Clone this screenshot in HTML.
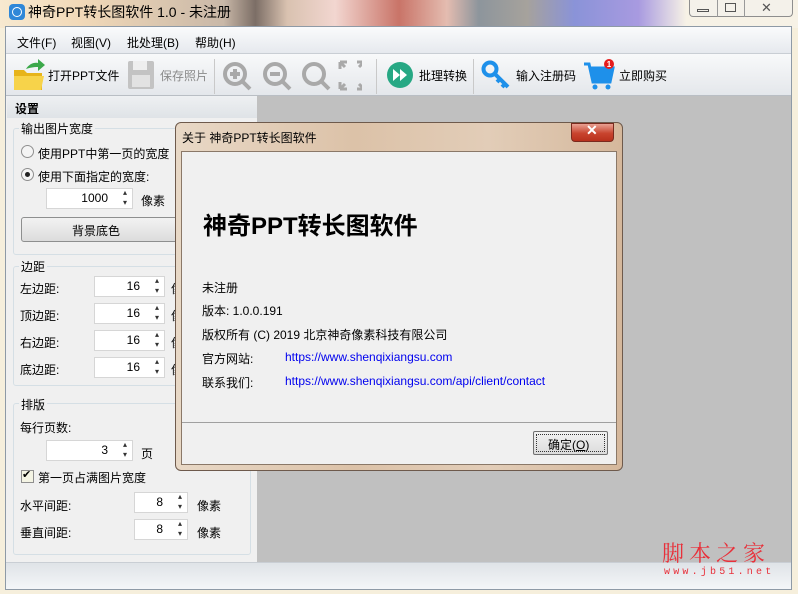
<!DOCTYPE html>
<html><head><meta charset="utf-8"><style>
*{margin:0;padding:0;box-sizing:border-box}
body{width:798px;height:594px;overflow:hidden;position:relative;font-family:"Liberation Sans","Noto Sans CJK SC",sans-serif;font-size:12px;color:#000;background:#f6efdc}
.a{position:absolute}
.t{position:absolute;white-space:nowrap}
.spin{position:absolute;background:#fff;border:1px solid #d6d6d6;text-align:right;padding-right:24px;font-size:12px;line-height:19px;height:21px}
.spin:after{content:"▴\A▾";white-space:pre;position:absolute;right:5px;top:-1px;font-size:8px;line-height:10px;color:#333}
.gb{position:absolute;border:1px solid #d5dfe5;border-radius:3px}
.gl{position:absolute;background:#f0f0f0;padding:0 2px;font-size:12px;line-height:14px}
a{color:#0000ee;text-decoration:none}
</style></head><body>
<div class="a" style="left:0;top:0;width:798px;height:28px;background:linear-gradient(90deg,#f7e9d0 0,#f2d9b8 10%,#c9b8a8 28%,#7c6e66 32%,#d9c2b0 36%,#f2d6d0 42%,#c97468 50%,#e4bcb0 56%,#8d959c 60%,#a6a29c 66%,#8a93d8 72%,#a89ae0 80%,#f7f2e6 86%,#f7f2e6 100%)"></div>
<div class="a" style="left:9px;top:4px;width:16px;height:16px;border-radius:4px;background:#2f87d8"></div>
<div class="a" style="left:12px;top:7px;width:10px;height:10px;border-radius:5px;border:1.5px solid #fff"></div>
<div class="t" style="left:28px;top:3px;font-size:14px;line-height:18px">神奇PPT转长图软件 1.0 - 未注册</div>
<div class="a" style="left:689px;top:0;width:104px;height:17px;border:1px solid #8e8e8e;border-top:none;border-radius:0 0 4px 4px;background:#f4f1ea"></div>
<div class="a" style="left:717px;top:0;width:1px;height:17px;background:#999"></div>
<div class="a" style="left:744px;top:0;width:1px;height:17px;background:#999"></div>
<div class="a" style="left:697px;top:9px;width:12px;height:3px;border:1px solid #555"></div>
<div class="a" style="left:725px;top:3px;width:11px;height:9px;border:1px solid #555"></div>
<div class="t" style="left:761px;top:0;font-size:13px;color:#555">✕</div>
<div class="a" style="left:5px;top:26px;width:787px;height:564px;background:#f0f0f0;border:1px solid #8e9aa6"></div>
<div class="a" style="left:6px;top:27px;width:785px;height:27px;background:linear-gradient(#fafbfc,#e6e9ee);border-bottom:1px solid #c9ced4"></div>
<div class="t" style="left:17px;top:34px;font-size:12px">文件(F)</div>
<div class="t" style="left:71px;top:34px">视图(V)</div>
<div class="t" style="left:127px;top:34px">批处理(B)</div>
<div class="t" style="left:195px;top:34px">帮助(H)</div>
<div class="a" style="left:6px;top:54px;width:785px;height:42px;background:linear-gradient(#f8f9fa,#e4e7eb);border-bottom:1px solid #b9bec4"></div>
<svg class="a" style="left:12px;top:56px" width="36" height="36"><path d="M2 14h10l3 3h15v17H2z" fill="#e7b41a"/><path d="M2 20h30l-3 14H2z" fill="#f7d34a"/><path d="M14 13c3-5 8-7 12-6v-4l7 6-7 6v-4c-5 0-9 1-12 2z" fill="#3ba84a"/></svg>
<div class="t" style="left:48px;top:67px">打开PPT文件</div>
<svg class="a" style="left:127px;top:60px" width="28" height="30"><rect x="1" y="1" width="26" height="28" rx="2" fill="#c3c3c3"/><rect x="6" y="1" width="14" height="9" fill="#eee"/><rect x="5" y="15" width="18" height="12" fill="#e2e2e2"/></svg>
<div class="t" style="left:160px;top:67px;color:#8a8a8a">保存照片</div>
<div class="a" style="left:214px;top:59px;width:1px;height:35px;background:#c9c9c9"></div>
<svg class="a" style="left:222px;top:59px" width="140" height="34" fill="none" stroke="#a9a9a9" stroke-width="4"><circle cx="13" cy="15" r="10"/><path d="M21 23l7 7M8 15h10M13 10v10"/><circle cx="53" cy="15" r="10"/><path d="M61 23l7 7M48 15h10"/><circle cx="92" cy="15" r="10"/><path d="M100 23l7 7"/><path d="M118 3h7M118 3v7M118 3l5 5M142 3h-7M142 3v7M142 3l-5 5M118 30h7M118 30v-7M118 30l5-5M142 30h-7M142 30v-7M142 30l-5-5" stroke-width="3"/></svg>
<div class="a" style="left:376px;top:59px;width:1px;height:35px;background:#c9c9c9"></div>
<svg class="a" style="left:386px;top:61px" width="28" height="28"><circle cx="14" cy="14" r="13" fill="#27a884"/><path d="M7 8l7 6-7 6zM14 8l7 6-7 6z" fill="#fff"/></svg>
<div class="t" style="left:419px;top:67px">批理转换</div>
<div class="a" style="left:473px;top:59px;width:1px;height:35px;background:#c9c9c9"></div>
<svg class="a" style="left:481px;top:60px" width="32" height="30"><circle cx="9" cy="9" r="6.5" fill="none" stroke="#1e90ea" stroke-width="4"/><path d="M13 13l14 14M19 19l-3 3M24 24l-3 3" stroke="#1e90ea" stroke-width="4"/></svg>
<div class="t" style="left:516px;top:67px">输入注册码</div>
<svg class="a" style="left:583px;top:58px" width="34" height="34"><path d="M1 6h5l4 18h17l3-14H8" fill="none" stroke="#1e90ea" stroke-width="3"/><path d="M8 10h22l-3 14H10z" fill="#1e90ea"/><circle cx="12" cy="29" r="2.5" fill="#1e90ea"/><circle cx="25" cy="29" r="2.5" fill="#1e90ea"/><circle cx="26" cy="6" r="5" fill="#e61c1c"/><text x="26" y="9" font-size="8" fill="#fff" text-anchor="middle" font-family="Liberation Sans" font-weight="bold">1</text></svg>
<div class="t" style="left:619px;top:67px">立即购买</div>
<div class="a" style="left:257px;top:96px;width:534px;height:466px;background:#c0c0c0"></div>
<div class="a" style="left:7px;top:96px;width:250px;height:22px;background:linear-gradient(#eef0f2,#dfe3e7)"></div>
<div class="t" style="left:15px;top:100px;font-weight:bold">设置</div>
<div class="gb" style="left:13px;top:128px;width:244px;height:127px"></div>
<div class="gl" style="left:19px;top:122px">输出图片宽度</div>
<div class="a" style="left:21px;top:145px;width:13px;height:13px;border-radius:50%;border:1px solid #8f8f8f;background:#f4f4f4"></div>
<div class="t" style="left:38px;top:145px">使用PPT中第一页的宽度</div>
<div class="a" style="left:21px;top:168px;width:13px;height:13px;border-radius:50%;border:1px solid #8f8f8f;background:#f4f4f4"></div>
<div class="a" style="left:25px;top:172px;width:5px;height:5px;border-radius:50%;background:#222"></div>
<div class="t" style="left:38px;top:168px">使用下面指定的宽度:</div>
<div class="spin" style="left:46px;top:188px;width:87px">1000</div>
<div class="t" style="left:141px;top:192px">像素</div>
<div class="a" style="left:21px;top:217px;width:160px;height:25px;border:1px solid #8e8f8f;border-radius:3px;background:linear-gradient(#f2f2f2,#dcdcdc)"></div>
<div class="t" style="left:72px;top:222px">背景底色</div>
<div class="gb" style="left:13px;top:266px;width:244px;height:120px"></div>
<div class="gl" style="left:19px;top:260px">边距</div>
<div class="t" style="left:20px;top:280px">左边距:</div><div class="spin" style="left:94px;top:276px;width:71px">16</div><div class="t" style="left:171px;top:280px">像</div>
<div class="t" style="left:20px;top:307px">顶边距:</div><div class="spin" style="left:94px;top:303px;width:71px">16</div><div class="t" style="left:171px;top:307px">像</div>
<div class="t" style="left:20px;top:334px">右边距:</div><div class="spin" style="left:94px;top:330px;width:71px">16</div><div class="t" style="left:171px;top:334px">像</div>
<div class="t" style="left:20px;top:361px">底边距:</div><div class="spin" style="left:94px;top:357px;width:71px">16</div><div class="t" style="left:171px;top:361px">像</div>
<div class="gb" style="left:13px;top:403px;width:238px;height:152px"></div>
<div class="gl" style="left:19px;top:398px">排版</div>
<div class="t" style="left:20px;top:419px">每行页数:</div>
<div class="spin" style="left:46px;top:440px;width:87px">3</div><div class="t" style="left:141px;top:445px">页</div>
<div class="a" style="left:21px;top:470px;width:13px;height:13px;border:1px solid #8f8f8f;background:#f4f4e4"></div>
<div class="t" style="left:22px;top:468px;font-size:11px">✔</div>
<div class="t" style="left:38px;top:469px">第一页占满图片宽度</div>
<div class="t" style="left:20px;top:497px">水平间距:</div><div class="spin" style="left:134px;top:492px;width:54px">8</div><div class="t" style="left:197px;top:497px">像素</div>
<div class="t" style="left:20px;top:524px">垂直间距:</div><div class="spin" style="left:134px;top:519px;width:54px">8</div><div class="t" style="left:197px;top:524px">像素</div>
<div class="a" style="left:6px;top:562px;width:785px;height:27px;background:linear-gradient(#dfe3e7,#f4f6f8);border-top:1px solid #c9ced4"></div>
<div class="t" style="left:662px;top:540px;font-size:22px;line-height:26px;color:#e8303a;font-family:'Noto Serif CJK SC',serif;letter-spacing:5px">脚本之家</div>
<div class="t" style="left:664px;top:567px;font-size:10px;line-height:12px;color:#e8303a;letter-spacing:3.2px;font-family:'Liberation Mono',monospace">www.jb51.net</div>
<div class="a" style="left:175px;top:122px;width:448px;height:349px;border:1px solid #6e5a4c;border-radius:6px;background:linear-gradient(90deg,#e8d8c6,#dcc2a8 40%,#e2cdb8 70%,#d5b89c)"></div>
<div class="t" style="left:182px;top:129px">关于 神奇PPT转长图软件</div>
<div class="a" style="left:571px;top:123px;width:43px;height:19px;border:1px solid #7a2a1e;border-radius:0 0 4px 4px;background:linear-gradient(#e9a192,#c8442e 55%,#b8301c)"></div>
<div class="t" style="left:586px;top:122px;color:#fff;font-weight:bold;font-size:14px">✕</div>
<div class="a" style="left:181px;top:151px;width:436px;height:314px;background:#f0f0f0;border:1px solid #8a7868"></div>
<div class="t" style="left:203px;top:206px;font-size:24px;font-weight:bold">神奇PPT转长图软件</div>
<div class="t" style="left:202px;top:279px">未注册</div>
<div class="t" style="left:202px;top:302px">版本: 1.0.0.191</div>
<div class="t" style="left:202px;top:326px">版权所有 (C) 2019 北京神奇像素科技有限公司</div>
<div class="t" style="left:202px;top:350px">官方网站:</div><div class="t" style="left:285px;top:350px"><a>https://www.shenqixiangsu.com</a></div>
<div class="t" style="left:202px;top:374px">联系我们:</div><div class="t" style="left:285px;top:374px"><a>https://www.shenqixiangsu.com/api/client/contact</a></div>
<div class="a" style="left:182px;top:422px;width:434px;height:1px;background:#a0a0a0"></div>
<div class="a" style="left:533px;top:431px;width:75px;height:24px;border:1px solid #707070;border-radius:2px;background:linear-gradient(#f2f2f2,#dcdcdc)"></div>
<div class="a" style="left:536px;top:434px;width:69px;height:18px;border:1px dotted #333"></div>
<div class="t" style="left:548px;top:436px">确定(<u>O</u>)</div>
</body></html>
